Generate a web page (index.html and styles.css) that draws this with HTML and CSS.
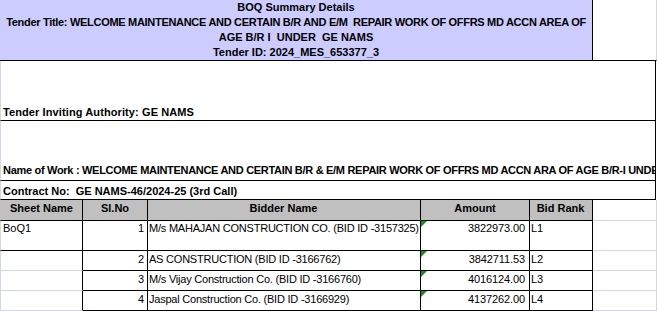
FILE: index.html
```html
<!DOCTYPE html>
<html>
<head>
<meta charset="utf-8">
<link rel="stylesheet" href="styles.css">
</head>
<body>
<div class="sheet">
  <div class="head">
    <div class="head-title">
      <div class="line">BOQ Summary Details</div>
      <div class="line tight">Tender Title: WELCOME MAINTENANCE AND CERTAIN B/R AND E/M  REPAIR WORK OF OFFRS MD ACCN AREA OF</div>
      <div class="line">AGE B/R I  UNDER  GE NAMS</div>
      <div class="line">Tender ID: 2024_MES_653377_3</div>
    </div>
    <div class="head-side"></div>
  </div>
  <div class="block block-authority"><span>Tender Inviting Authority: GE NAMS</span></div>
  <div class="block block-work tight"><span>Name of Work : WELCOME MAINTENANCE AND CERTAIN B/R &amp; E/M REPAIR WORK OF OFFRS MD ACCN ARA OF AGE B/R-I UNDER GE NAMS</span></div>
  <div class="block block-contract"><span>Contract No:  GE NAMS-46/2024-25 (3rd Call)</span></div>

  <div class="row row-head">
    <div class="c c1">Sheet Name</div>
    <div class="c c2">Sl.No</div>
    <div class="c c3">Bidder Name</div>
    <div class="c c4">Amount</div>
    <div class="c c5">Bid Rank</div>
    <div class="c c6"></div>
  </div>
  <div class="row row-tall">
    <div class="c c1 dark-bottom">BoQ1</div>
    <div class="c c2 num">1</div>
    <div class="c c3">M/s MAHAJAN CONSTRUCTION CO. (BID ID -3157325)</div>
    <div class="c c4 num"><i class="flag"></i>3822973.00</div>
    <div class="c c5">L1</div>
    <div class="c c6"></div>
  </div>
  <div class="row">
    <div class="c c1"></div>
    <div class="c c2 num">2</div>
    <div class="c c3">AS CONSTRUCTION (BID ID -3166762)</div>
    <div class="c c4 num"><i class="flag"></i>3842711.53</div>
    <div class="c c5">L2</div>
    <div class="c c6"></div>
  </div>
  <div class="row">
    <div class="c c1"></div>
    <div class="c c2 num">3</div>
    <div class="c c3">M/s Vijay Construction Co. (BID ID -3166760)</div>
    <div class="c c4 num"><i class="flag"></i>4016124.00</div>
    <div class="c c5">L3</div>
    <div class="c c6"></div>
  </div>
  <div class="row">
    <div class="c c1"></div>
    <div class="c c2 num">4</div>
    <div class="c c3">Jaspal Construction Co. (BID ID -3166929)</div>
    <div class="c c4 num"><i class="flag"></i>4137262.00</div>
    <div class="c c5">L4</div>
    <div class="c c6"></div>
  </div>
</div>
</body>
</html>
```

FILE: styles.css
```css
* { box-sizing: border-box; margin: 0; padding: 0; }
html, body { background: #ffffff; }
body {
  margin: 0;
  font-family: "Liberation Sans", Arial, sans-serif;
  font-size: 11px;
  color: #000000;
  overflow: hidden;
}
.sheet { width: 657px; }

.head {
  display: flex;
  height: 61px;
  border-bottom: 1px solid #000;
  width: 657px;
  border-right: 1px solid #d0d7e5;
}
.head-title {
  width: 593px;
  background: #ccccff;
  border-right: 1px solid #000;
  text-align: center;
  font-weight: bold;
  overflow: hidden;
}
.head-title .line {
  height: 15px;
  line-height: 15px;
  white-space: pre;
}
.head-side { flex: 1; background: #fff; }

.tight { letter-spacing: -0.3px; }

.block {
  width: 656px;
  border-left: 1px solid #d0d7e5;
  border-right: 1px solid #000;
  border-bottom: 1px solid #000;
  font-weight: bold;
  white-space: pre;
  overflow: hidden;
  display: flex;
  padding-left: 2px;
  line-height: 15px;
}
.block-authority { height: 60px; align-items: flex-end; padding-bottom: 0; letter-spacing: 0.1px; }
.block-work { height: 60px; align-items: flex-end; padding-bottom: 2px; }
.block-contract { height: 19px; align-items: flex-end; padding-bottom: 0; }

.row { display: flex; height: 20px; }
.row-tall { height: 30px; }
.row-head { height: 21px; }

.c {
  height: 100%;
  white-space: nowrap;
  overflow: hidden;
  line-height: 15px;
  padding: 1px 2px 0 2px;
  border-right: 1px solid #000;
  border-bottom: 1px solid #000;
  position: relative;
}
.c1 { width: 83px; border-left: 1px solid #d0d7e5; border-bottom-color: #d0d7e5; }
.c2 { width: 65px; }
.c3 { width: 273px; padding-left: 1px; letter-spacing: -0.22px; }
.c4 { width: 109px; letter-spacing: -0.1px; }
.c5 { width: 63px; padding-left: 1px; }
.c6 { width: 64px; border-right-color: #d0d7e5; border-bottom-color: #d0d7e5; }
.c1.dark-bottom { border-bottom-color: #000; }

.row-head .c {
  background: #c0c0c0;
  font-weight: bold;
  text-align: center;
  padding-top: 1px;
  letter-spacing: 0;
}
.row-head .c1 { border-bottom-color: #000; border-left-color: #c0c0c0; }
.row-head .c6 { background: #fff; }
.row-tall .c { padding-top: 0; }

.num { text-align: right; }
.c4.num { padding-right: 4px; }
.c2.num { padding-right: 3px; }

.flag {
  position: absolute;
  left: 0;
  top: 0;
  width: 0;
  height: 0;
  border-top: 6px solid #1f8a1f;
  border-right: 6px solid transparent;
}
```
